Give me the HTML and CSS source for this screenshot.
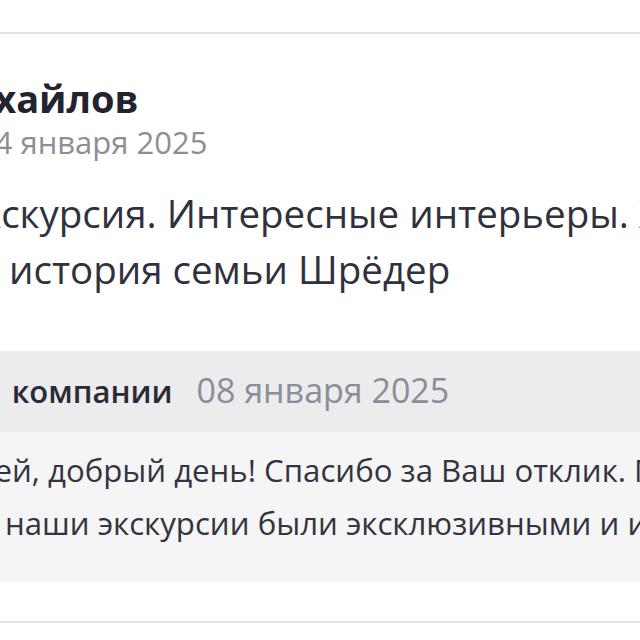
FILE: index.html
```html
<!DOCTYPE html>
<html lang="ru">
<head>
<meta charset="utf-8">
<link rel="stylesheet" href="styles.css">
</head>
<body>
<div class="page">
  <div class="divider divider-top"></div>
  <article class="review">
    <div class="author">
      <div class="name">Михайлов</div>
      <div class="date">14 января 2025</div>
    </div>
    <p class="text">
      <span class="line line-1">Экскурсия. Интересные интерьеры. Хорошо</span>
      <span class="line line-2">история семьи Шрёдер</span>
    </p>
    <div class="reply">
      <div class="reply-head">
        <span class="reply-title">Ответ компании</span><span class="reply-date">08 января 2025</span>
      </div>
      <div class="reply-body">
        <span class="line rline-1">Андрей, добрый день! Спасибо за Ваш отклик. Мы</span>
        <span class="line rline-2">рады, что наши экскурсии были эксклюзивными и интересными</span>
      </div>
    </div>
  </article>
  <div class="divider divider-bottom"></div>
</div>
</body>
</html>
```
FILE: styles.css
```css
html, body {
  margin: 0;
  padding: 0;
  background: #ffffff;
}
body {
  width: 640px;
  height: 640px;
  overflow: hidden;
  font-family: "Open Sans", "Noto Sans", sans-serif;
}
.page {
  display: flex;
  flex-direction: column;
  padding-top: 32px;
}
.divider {
  height: 2px;
  background: #e4e4e4;
  flex: none;
}
.review {
  display: flex;
  flex-direction: column;
  padding-top: 44px;
}
.author {
  display: flex;
  flex-direction: column;
}
.name {
  font-size: 38px;
  line-height: 40px;
  font-weight: 700;
  color: #23232f;
  white-space: nowrap;
  margin-left: -69px;
}
.date {
  font-size: 31px;
  line-height: 48px;
  color: #8e8e93;
  white-space: nowrap;
  margin-left: -23px;
}
.text {
  margin: 19px 0 0 0;
  font-size: 38.5px;
  line-height: 56px;
  color: #30313d;
  display: flex;
  flex-direction: column;
}
.line {
  display: block;
  white-space: nowrap;
}
.line-1 { margin-left: -43px; }
.line-2 { margin-left: 9px; }
.reply {
  margin-top: 54px;
  display: flex;
  flex-direction: column;
}
.reply-head {
  height: 81px;
  background: #ececec;
  font-size: 34px;
  line-height: 78px;
  white-space: nowrap;
}
.reply-title {
  font-size: 31px;
  font-weight: 600;
  color: #2a2b36;
  word-spacing: 7px;
  margin-left: -96px;
}
.reply-date {
  color: #8a8e99;
  margin-left: 24px;
}
.reply-body {
  background: #f5f5f5;
  padding: 12px 0 32px 0;
  font-size: 31.2px;
  line-height: 53px;
  color: #33343f;
}
.rline-1 { margin-left: -82px; }
.rline-2 { margin-left: -150px; }
.divider-bottom {
  margin-top: 39px;
}
```
